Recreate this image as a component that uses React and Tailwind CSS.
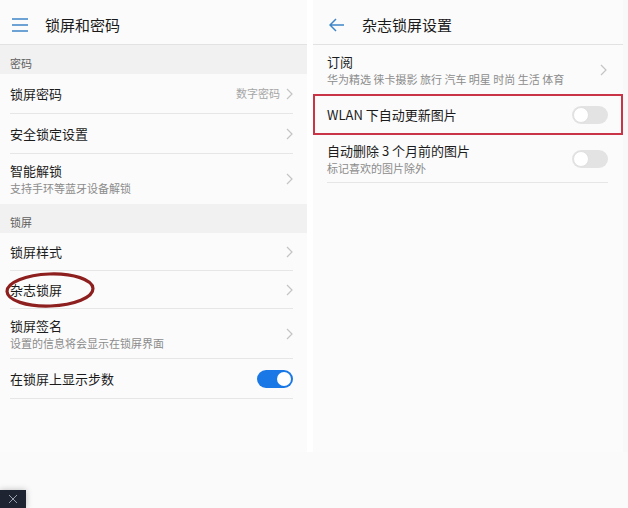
import React from 'react';

const font = { fontFamily: '"Noto Sans CJK SC", "Noto Sans", sans-serif' };

const Chevron = () => (
  <svg width="7" height="12" viewBox="0 0 7 12" className="shrink-0">
    <path d="M1 1 L6 6 L1 11" fill="none" stroke="#c4c4c4" strokeWidth="1.2" />
  </svg>
);

const Toggle = ({ on }) =>
  on ? (
    <div className="flex h-[18px] w-[36px] items-center justify-end rounded-full bg-[#1a78e6] px-[2px]">
      <div className="h-[14px] w-[14px] rounded-full bg-white" />
    </div>
  ) : (
    <div className="flex h-[18px] w-[36px] items-center rounded-full bg-[#e3e3e3] px-[1px]">
      <div className="h-[16px] w-[16px] rounded-full border border-[#e0e0e0] bg-white" />
    </div>
  );

const Section = ({ label }) => (
  <div className="flex h-[29px] items-end bg-[#f1f1f1] pb-[4px] pl-[10px] text-[11px] leading-[14px] text-[#5f5f5f]">
    {label}
  </div>
);

const Row = ({ title, sub, right, h = 'h-[40px]', children }) => (
  <div className={`ml-[10px] mr-[14px] flex ${h} items-center border-b border-[#e6e6e6]`}>
    <div className="flex flex-1 flex-col">
      <span className="text-[13px] leading-[18px] text-[#1c1c1c]">{title}</span>
      {sub && <span className="text-[11px] leading-[16px] text-[#8c8c8c]">{sub}</span>}
    </div>
    {right && <span className="mr-[6px] text-[11px] text-[#a6a6a6]">{right}</span>}
    {children}
  </div>
);

export default function App() {
  return (
    <div className="flex h-[508px] w-[628px] flex-col bg-[#fafafa]" style={font}>
      <div className="flex h-[452px] bg-white">
        {/* left panel */}
        <div className="relative w-[307px] bg-[#fbfbfb]">
          <div className="flex h-[45px] items-center border-b border-[#e2e2e2] pt-[6px]">
            <svg width="16" height="14" viewBox="0 0 16 14" className="ml-[12px]">
              <path d="M0 1 H16 M0 7 H16 M0 13 H16" stroke="#3f86c8" strokeWidth="1.6" />
            </svg>
            <span className="ml-[17px] text-[15px] text-[#1a1a1a]">锁屏和密码</span>
          </div>
          <Section label="密码" />
          <Row title="锁屏密码" right="数字密码">
            <Chevron />
          </Row>
          <Row title="安全锁定设置">
            <Chevron />
          </Row>
          <Row title="智能解锁" sub="支持手环等蓝牙设备解锁" h="h-[50px] border-b-0">
            <Chevron />
          </Row>
          <Section label="锁屏" />
          <Row title="锁屏样式" h="h-[38px]">
            <Chevron />
          </Row>
          <Row title="杂志锁屏" h="h-[38px]">
            <Chevron />
          </Row>
          <Row title="锁屏签名" sub="设置的信息将会显示在锁屏界面" h="h-[50px]">
            <Chevron />
          </Row>
          <Row title="在锁屏上显示步数">
            <Toggle on />
          </Row>
          <svg width="94" height="42" viewBox="0 0 94 42" className="absolute left-[3px] top-[269px]">
            <ellipse cx="47" cy="21" rx="43" ry="16" fill="none" stroke="#8e1f1f" strokeWidth="3.2" transform="rotate(-2 47 21)" />
          </svg>
        </div>

        <div className="w-[6px]" />

        {/* right panel */}
        <div className="w-[310px] bg-[#fbfbfb]">
          <div className="flex h-[45px] items-center border-b border-[#e2e2e2] pt-[6px]">
            <svg width="16" height="14" viewBox="0 0 16 14" className="ml-[16px]">
              <path d="M15 7 H1 M7 1 L1 7 L7 13" fill="none" stroke="#3f86c8" strokeWidth="1.5" />
            </svg>
            <span className="ml-[17px] text-[15px] text-[#1a1a1a]">杂志锁屏设置</span>
          </div>
          <div className="ml-[14px] mr-[16px] flex h-[49px] items-center">
            <div className="flex flex-1 flex-col">
              <span className="text-[13px] leading-[18px] text-[#1c1c1c]">订阅</span>
              <span className="text-[11px] leading-[16px] text-[#8c8c8c]">华为精选 徕卡摄影 旅行 汽车 明星 时尚 生活 体育</span>
            </div>
            <Chevron />
          </div>
          <div className="flex h-[41px] items-center border-2 border-[#c93447] pl-[12px] pr-[13px]">
            <span className="flex-1 text-[13px] text-[#1c1c1c]">WLAN 下自动更新图片</span>
            <Toggle />
          </div>
          <div className="ml-[14px] mr-[15px] flex h-[48px] items-center border-b border-[#e6e6e6]">
            <div className="flex flex-1 flex-col">
              <span className="text-[13px] leading-[18px] text-[#1c1c1c]">自动删除 3 个月前的图片</span>
              <span className="text-[11px] leading-[16px] text-[#8c8c8c]">标记喜欢的图片除外</span>
            </div>
            <Toggle />
          </div>
        </div>
        <div className="flex-1 bg-[#f8f8f8]" />
      </div>

      <div className="mt-auto flex h-[18px] w-[26px] items-center justify-center bg-[#1f2433] shadow-[0_0_6px_rgba(0,0,0,0.25)]">
        <svg width="10" height="10" viewBox="0 0 10 10">
          <path d="M1 1 L9 9 M9 1 L1 9" stroke="#9aa0ab" strokeWidth="1" />
        </svg>
      </div>
    </div>
  );
}
